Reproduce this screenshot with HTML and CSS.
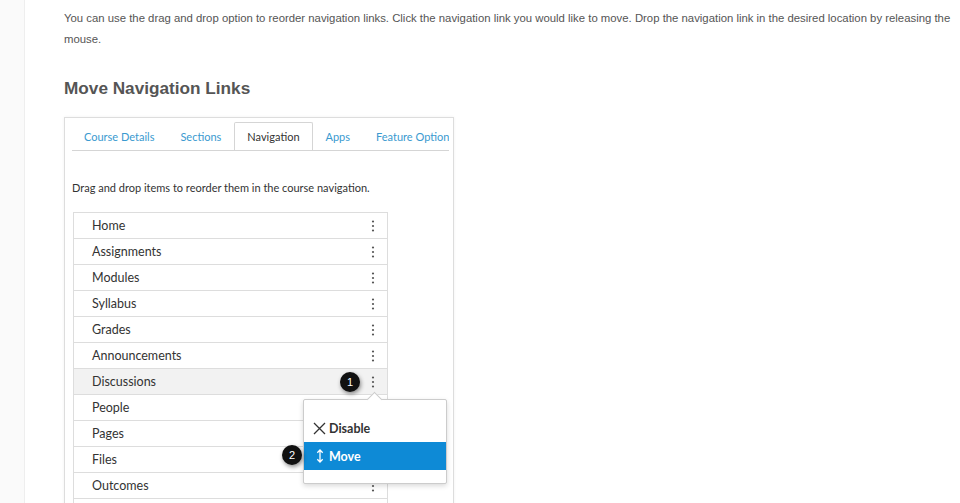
FILE: index.html
```html
<!DOCTYPE html>
<html>
<head>
	<title>Move Navigation Links</title>
	<link rel="stylesheet" href="styles.css">
</head>
<body>
	<div class="page">
		<div class="rail"></div>
		<div class="main">
			<p class="intro">You can use the drag and drop option to reorder navigation links. Click the navigation link you would like to move. Drop the navigation link in the desired location by releasing the mouse.</p>
			<h2>Move Navigation Links</h2>

			<div class="shot">
				<div class="tabs">
					<span class="tab">Course Details</span>
					<span class="tab">Sections</span>
					<span class="tab active">Navigation</span>
					<span class="tab">Apps</span>
					<span class="tab">Feature Options</span>
				</div>
				<p class="hint">Drag and drop items to reorder them in the course navigation.</p>

				<div class="list">
					<div class="row"><span>Home</span><svg class="kebab" width="4" height="12" viewBox="0 0 4 12"><circle cx="2" cy="1.5" r="1.1"/><circle cx="2" cy="6" r="1.1"/><circle cx="2" cy="10.5" r="1.1"/></svg></div>
					<div class="row"><span>Assignments</span><svg class="kebab" width="4" height="12" viewBox="0 0 4 12"><circle cx="2" cy="1.5" r="1.1"/><circle cx="2" cy="6" r="1.1"/><circle cx="2" cy="10.5" r="1.1"/></svg></div>
					<div class="row"><span>Modules</span><svg class="kebab" width="4" height="12" viewBox="0 0 4 12"><circle cx="2" cy="1.5" r="1.1"/><circle cx="2" cy="6" r="1.1"/><circle cx="2" cy="10.5" r="1.1"/></svg></div>
					<div class="row"><span>Syllabus</span><svg class="kebab" width="4" height="12" viewBox="0 0 4 12"><circle cx="2" cy="1.5" r="1.1"/><circle cx="2" cy="6" r="1.1"/><circle cx="2" cy="10.5" r="1.1"/></svg></div>
					<div class="row"><span>Grades</span><svg class="kebab" width="4" height="12" viewBox="0 0 4 12"><circle cx="2" cy="1.5" r="1.1"/><circle cx="2" cy="6" r="1.1"/><circle cx="2" cy="10.5" r="1.1"/></svg></div>
					<div class="row"><span>Announcements</span><svg class="kebab" width="4" height="12" viewBox="0 0 4 12"><circle cx="2" cy="1.5" r="1.1"/><circle cx="2" cy="6" r="1.1"/><circle cx="2" cy="10.5" r="1.1"/></svg></div>
					<div class="row current"><span>Discussions</span><svg class="kebab" width="4" height="12" viewBox="0 0 4 12"><circle cx="2" cy="1.5" r="1.1"/><circle cx="2" cy="6" r="1.1"/><circle cx="2" cy="10.5" r="1.1"/></svg></div>
					<div class="row"><span>People</span></div>
					<div class="row"><span>Pages</span></div>
					<div class="row"><span>Files</span></div>
					<div class="row"><span>Outcomes</span><svg class="kebab" width="4" height="12" viewBox="0 0 4 12"><circle cx="2" cy="1.5" r="1.1"/><circle cx="2" cy="6" r="1.1"/><circle cx="2" cy="10.5" r="1.1"/></svg></div>
					<div class="row"><span>Quizzes</span><svg class="kebab" width="4" height="12" viewBox="0 0 4 12"><circle cx="2" cy="1.5" r="1.1"/><circle cx="2" cy="6" r="1.1"/><circle cx="2" cy="10.5" r="1.1"/></svg></div>

					<div class="menu">
						<div class="item"><svg width="13" height="13" viewBox="0 0 13 13"><path d="M1 1L12 12M12 1L1 12" stroke="#333" stroke-width="1.3" fill="none"/></svg>Disable</div>
						<div class="item selected"><svg width="8" height="14" viewBox="0 0 8 14"><path d="M4 1V13M1.3 3.7L4 1L6.7 3.7M1.3 10.3L4 13L6.7 10.3" stroke="#fff" stroke-width="1.3" fill="none"/></svg>Move</div>
					</div>

					<span class="badge one">1</span>
					<span class="badge two">2</span>
				</div>
			</div>
		</div>
	</div>
</body>
</html>
```

FILE: styles.css
```css
body {
  margin: 0;
  background: #fff;
  font-family: "Liberation Sans", Arial, sans-serif;
  overflow: hidden;
}

.page {
  display: flex;
  min-height: 503px;
}

.rail {
  width: 24px;
  flex: none;
  background: #fafafa;
  border-right: 1px solid #eee;
}

.main {
  flex: 1;
  padding: 0 0 0 39px;
}

.intro {
  margin: 8px 0 0;
  font-size: 11.35px;
  line-height: 21px;
  color: #555;
}

h2 {
  margin: 27px 0 0;
  font-size: 17.2px;
  line-height: 22px;
  color: #555;
}

.shot {
  margin-top: 18px;
  width: 381px;
  height: 420px;
  border: 1px solid #ddd;
  border-bottom: none;
  padding: 4px 0 0 7px;
  font-family: Lato, "Liberation Sans", sans-serif;
  overflow: hidden;
  box-shadow: 0 0 3px rgba(0,0,0,0.06);
}

.tabs {
  display: flex;
  white-space: nowrap;
  border-bottom: 1px solid #d5d5d5;
  height: 28px;
  margin-right: 4px;
  overflow: hidden;
}

.tab {
  padding: 0 12px;
  line-height: 27px;
  font-size: 11px;
  color: #3a9ad0;
  border: 1px solid transparent;
  border-bottom: none;
}

.tab:first-child {
  padding-left: 11px;
}

.tab.active {
  color: #333;
  border-color: #d5d5d5;
  background: #fff;
  border-radius: 2px 2px 0 0;
  height: 28px;
}

.hint {
  margin: 30px 0 17px 0;
  font-size: 11px;
  line-height: 14px;
  color: #333;
}

.list {
  position: relative;
  width: 315px;
  margin-left: 1px;
  border-top: 1px solid #ddd;
}

.row {
  display: flex;
  align-items: center;
  justify-content: space-between;
  height: 25px;
  padding: 0 12px 0 18px;
  border: 1px solid #ddd;
  border-top: none;
  font-size: 12.5px;
  color: #333;
}

.row.current {
  background: #f2f2f2;
}

.kebab {
  fill: #555;
}

.menu {
  position: absolute;
  left: 230px;
  top: 186px;
  width: 142px;
  padding: 14px 0 13px;
  background: #fff;
  border: 1px solid #ccc;
  border-radius: 2px;
  box-shadow: 0 2px 5px rgba(0,0,0,0.15);
  font-family: Lato, "Liberation Sans", sans-serif;
}

.menu::before {
  content: "";
  position: absolute;
  top: -6px;
  left: 65px;
  width: 10px;
  height: 10px;
  background: #fff;
  border-left: 1px solid #ccc;
  border-top: 1px solid #ccc;
  transform: rotate(45deg);
}

.item {
  display: flex;
  align-items: center;
  gap: 3px;
  height: 28px;
  padding: 0 8px 0 9px;
  font-size: 12.5px;
  font-weight: bold;
  color: #333;
}

.item.selected {
  background: #0e8ad6;
  color: #fff;
  gap: 5px;
  padding-left: 12px;
}

.badge {
  position: absolute;
  width: 20px;
  height: 20px;
  border-radius: 50%;
  background: #111;
  color: #fff;
  font-family: "Liberation Sans", Arial, sans-serif;
  font-size: 11px;
  line-height: 20px;
  text-align: center;
  box-shadow: 1px 2px 4px rgba(0,0,0,0.45);
}

.badge.one {
  left: 267px;
  top: 159px;
}

.badge.two {
  left: 209px;
  top: 232px;
}
```
